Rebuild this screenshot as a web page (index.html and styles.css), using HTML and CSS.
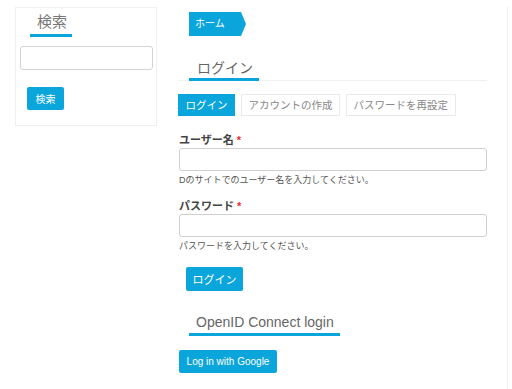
FILE: index.html
```html
<!DOCTYPE html>
<html lang="ja">
<head>
<meta charset="utf-8">
<link rel="stylesheet" href="styles.css">
</head>
<body>
<div class="page">
  <aside class="sidebar">
    <h2 class="side-title"><span>検索</span></h2>
    <input class="side-input" type="text">
    <button class="btn side-btn">検索</button>
  </aside>
  <main class="content">
    <nav class="crumb">ホーム</nav>
    <div class="heading"><h1>ログイン</h1></div>
    <div class="tabs">
      <span class="tab active">ログイン</span>
      <span class="tab">アカウントの作成</span>
      <span class="tab">パスワードを再設定</span>
    </div>
    <div class="field">
      <label>ユーザー名 <span class="req">*</span></label>
      <input type="text">
      <p class="desc">Dのサイトでのユーザー名を入力してください。</p>
    </div>
    <div class="field">
      <label>パスワード <span class="req">*</span></label>
      <input type="password">
      <p class="desc">パスワードを入力してください。</p>
    </div>
    <button class="btn submit">ログイン</button>
    <h2 class="oid"><span>OpenID Connect login</span></h2>
    <button class="btn google">Log in with Google</button>
  </main>
</div>
</body>
</html>
```
FILE: styles.css
```css
html, body {
  margin: 0;
  background: #fff;
}
body {
  font-family: "Liberation Sans", "Noto Sans CJK JP", sans-serif;
  color: #333;
}
.page {
  display: flex;
  align-items: flex-start;
  padding-top: 7px;
}
.sidebar {
  margin-left: 15px;
  width: 142px;
  height: 119px;
  box-sizing: border-box;
  border: 1px solid #efefef;
  padding: 0 4px;
}
.side-title {
  margin: 0;
  padding-left: 10px;
  font-weight: normal;
  font-size: 15px;
  line-height: 20px;
}
.side-title span {
  display: inline-block;
  color: #777;
  padding: 4px 5px 2px 7px;
  border-bottom: 3px solid #0aa5db;
}
.side-input {
  display: block;
  margin: 9px 0 0 0;
  width: 133px;
  height: 24px;
  box-sizing: border-box;
  border: 1px solid #d4d4d4;
  border-radius: 3px;
}
.btn {
  display: block;
  border: none;
  background: #0aa5db;
  color: #fff;
  border-radius: 2px;
  font-family: "Liberation Sans", "Noto Sans CJK JP", sans-serif;
  padding: 0;
}
.side-btn {
  margin: 17px 0 0 7px;
  width: 37px;
  height: 23px;
  font-size: 10px;
}
.content {
  margin-left: 21px;
  width: 330px;
  min-height: 390px;
  box-sizing: border-box;
  border-right: 1px solid #f1f1f1;
  margin-top: -1px;
  padding-top: 1px;
}
.crumb {
  margin: 5px 0 0 11px;
  width: 57px;
  height: 24px;
  box-sizing: border-box;
  background: #0aa5db;
  color: #fff;
  font-size: 10px;
  line-height: 24px;
  padding-left: 6px;
  clip-path: polygon(0 0, 52px 0, 57px 12px, 52px 24px, 0 24px);
}
.heading {
  margin-top: 22px;
  width: 309px;
  border-bottom: 1px solid #f0f0f0;
  height: 22px;
}
.heading h1 {
  display: inline-block;
  margin: 0 0 0 11px;
  padding: 0 6px 0 8px;
  font-size: 14px;
  line-height: 20px;
  font-weight: normal;
  color: #666;
  border-bottom: 3px solid #0aa5db;
}
.tabs {
  display: flex;
  gap: 6px;
  margin-top: 13px;
}
.tab {
  height: 22px;
  box-sizing: border-box;
  border: 1px solid #eaeaea;
  padding: 0 6.5px;
  font-size: 10.5px;
  line-height: 20px;
  color: #888;
}
.tab.active {
  background: #0aa5db;
  border-color: #0aa5db;
  color: #fff;
}
.field {
  margin-top: 17px;
}
.field + .field {
  margin-top: 13px;
}
.field label {
  display: block;
  font-size: 11px;
  font-weight: bold;
  line-height: 14px;
  color: #444;
  margin-left: 1px;
}
.req {
  color: #e8283c;
}
.field input {
  display: block;
  margin: 1px 0 0 1px;
  width: 308px;
  height: 23px;
  box-sizing: border-box;
  border: 1px solid #cfcfcf;
  border-radius: 3px;
}
.desc {
  margin: 3px 0 0 1px;
  font-size: 9px;
  line-height: 12px;
  color: #555;
}
.submit {
  margin: 15px 0 0 8px;
  width: 57px;
  height: 24px;
  font-size: 11px;
}
.oid {
  margin: 21px 0 0 11px;
  font-size: 14px;
  font-weight: normal;
  line-height: 20px;
}
.oid span {
  display: inline-block;
  color: #666;
  padding: 0 6px 1px 7px;
  border-bottom: 3px solid #0aa5db;
}
.google {
  margin: 14px 0 0 1px;
  width: 98px;
  height: 23px;
  font-size: 10px;
}
```
